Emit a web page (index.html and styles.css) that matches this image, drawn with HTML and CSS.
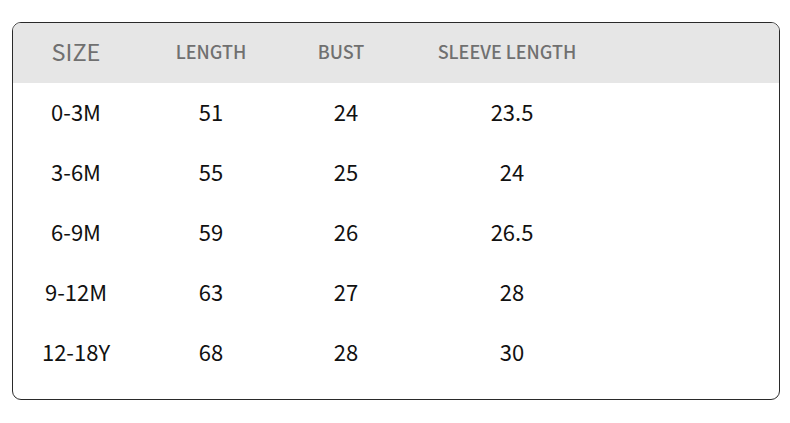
FILE: index.html
```
<!DOCTYPE html>
<html>
<head>
<meta charset="utf-8">
<link rel="stylesheet" href="styles.css">
</head>
<body>
<div class="chart">
  <div class="row head">
    <div class="cell size">SIZE</div>
    <div class="cell">LENGTH</div>
    <div class="cell shift">BUST</div>
    <div class="cell shift">SLEEVE LENGTH</div>
  </div>
  <div class="row"><div class="cell">0-3M</div><div class="cell">51</div><div class="cell">24</div><div class="cell">23.5</div></div>
  <div class="row"><div class="cell">3-6M</div><div class="cell">55</div><div class="cell">25</div><div class="cell">24</div></div>
  <div class="row"><div class="cell">6-9M</div><div class="cell">59</div><div class="cell">26</div><div class="cell">26.5</div></div>
  <div class="row"><div class="cell">9-12M</div><div class="cell">63</div><div class="cell">27</div><div class="cell">28</div></div>
  <div class="row"><div class="cell">12-18Y</div><div class="cell">68</div><div class="cell">28</div><div class="cell">30</div></div>
</div>
</body>
</html>
```

FILE: styles.css
```
html, body {
  margin: 0;
  padding: 0;
  background: #fff;
}
body {
  font-family: "Noto Sans CJK SC", "Noto Sans", sans-serif;
  color: #111;
}
.chart {
  box-sizing: border-box;
  margin: 22px 0 0 12px;
  width: 768px;
  height: 378px;
  border: 1px solid #2a2a2a;
  border-radius: 9px;
  overflow: hidden;
}
.row {
  box-sizing: border-box;
  display: grid;
  grid-template-columns: 126px 144px 126px 206px 1fr;
  height: 60px;
  padding-bottom: 4px;
  align-items: center;
  font-size: 22px;
}
.head {
  background: #e6e6e6;
  color: #707070;
  font-size: 18px;
  font-weight: 500;
}
.cell {
  text-align: center;
  white-space: nowrap;
}
.head .size {
  font-size: 23.5px;
  font-weight: 400;
}
.head .shift {
  padding-right: 10px;
}
```
